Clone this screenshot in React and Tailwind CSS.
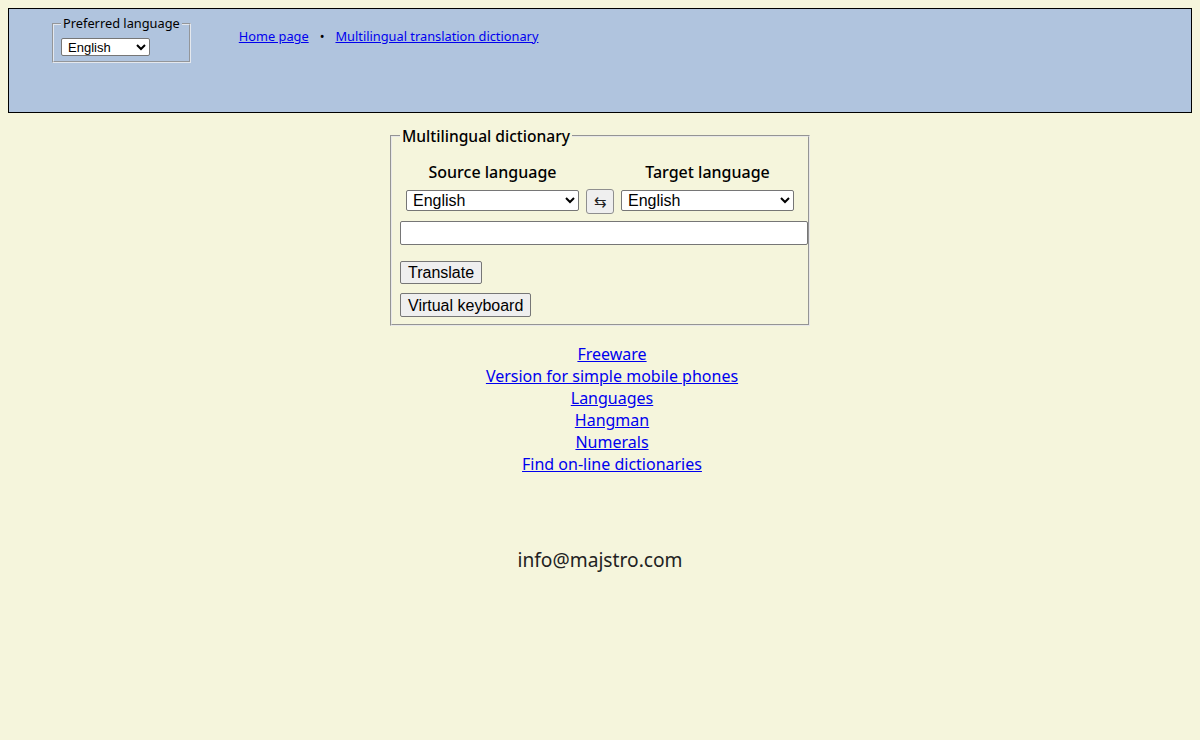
import React from "react";

export default function App() {
  const links = [
    "Freeware",
    "Version for simple mobile phones",
    "Languages",
    "Hangman",
    "Numerals",
    "Find on-line dictionaries",
  ];
  return (
    <div className="min-h-[740px] bg-[#f5f5dc] pt-[8px] pb-[10px] font-['Noto_Sans',sans-serif] text-black">
      <div className="mx-[8px] flex h-[105px] items-start border border-black bg-[#b0c4de]">
        <fieldset className="ml-[43px] mt-[6px] border-2 border-[#e4e8ee] [border-style:groove] px-[7px] pb-[5px]">
          <legend className="ml-0 px-[2px] text-[12.8px] leading-[17px]">Preferred language</legend>
          <select className="mt-[6px] block h-[18px] w-[89px] rounded-[2px] border border-[#767676] bg-white pl-[2px] font-['Liberation_Sans',Arial,sans-serif] text-[13px] leading-[16px]">
            <option>English</option>
          </select>
        </fieldset>
        <div className="ml-[48px] mt-[18px] flex items-center text-[12.8px] leading-[18px]">
          <a href="#" className="text-[#0000ee] underline">Home page</a>
          <span className="mx-[11px]">•</span>
          <a href="#" className="text-[#0000ee] underline">Multilingual translation dictionary</a>
        </div>
      </div>

      <fieldset className="mx-auto mt-[14px] w-[420px] min-w-0 border-2 border-[#e8e8e8] [border-style:groove] px-[8px] pb-[7px]">
        <legend className="px-[2px] text-[15.6px] font-medium leading-[18px]">Multilingual dictionary</legend>
        <div className="mt-[16px] flex pl-[6px] text-[16px] font-medium leading-[22px]">
          <div className="w-[173px] text-center">Source language</div>
          <div className="w-[42px]"></div>
          <div className="w-[173px] text-center">Target language</div>
        </div>
        <div className="mt-[6px] flex h-[25px] items-start pl-[6px] font-['Liberation_Sans',Arial,sans-serif]">
          <select className="mt-[1px] h-[21px] w-[173px] rounded-[2px] border border-[#767676] bg-white pl-[2px] text-[16px] leading-[19px]">
            <option>English</option>
          </select>
          <button className="ml-[7px] flex h-[25px] w-[28px] items-center justify-center rounded-[3px] border border-[#8f8f8f] bg-[#efefef] text-[15px] leading-none text-[#222]">
            ⇆
          </button>
          <select className="ml-[7px] mt-[1px] h-[21px] w-[173px] rounded-[2px] border border-[#767676] bg-white pl-[2px] text-[16px] leading-[19px]">
            <option>English</option>
          </select>
        </div>
        <input
          type="text"
          className="mt-[7px] block h-[24px] w-[408px] rounded-[2px] border border-[#767676] bg-white px-[2px] font-['Liberation_Sans',Arial,sans-serif] text-[16px]"
        />
        <button className="mt-[16px] block h-[23px] rounded-[2px] border border-[#767676] bg-[#efefef] px-[7px] font-['Liberation_Sans',Arial,sans-serif] text-[16px] leading-[19px]">
          Translate
        </button>
        <button className="mt-[9px] block h-[24px] rounded-[2px] border border-[#767676] bg-[#efefef] px-[7px] font-['Liberation_Sans',Arial,sans-serif] text-[16px] leading-[19px]">
          Virtual keyboard
        </button>
      </fieldset>

      <div className="mt-[17px] flex flex-col items-center pl-[24px] text-[16px] leading-[22px]">
        {links.map((l) => (
          <a key={l} href="#" className="text-[#0000ee] underline">
            {l}
          </a>
        ))}
      </div>

      <div className="mt-[72px] text-center text-[19.2px] leading-[26px] text-[#222]">info@majstro.com</div>
    </div>
  );
}
